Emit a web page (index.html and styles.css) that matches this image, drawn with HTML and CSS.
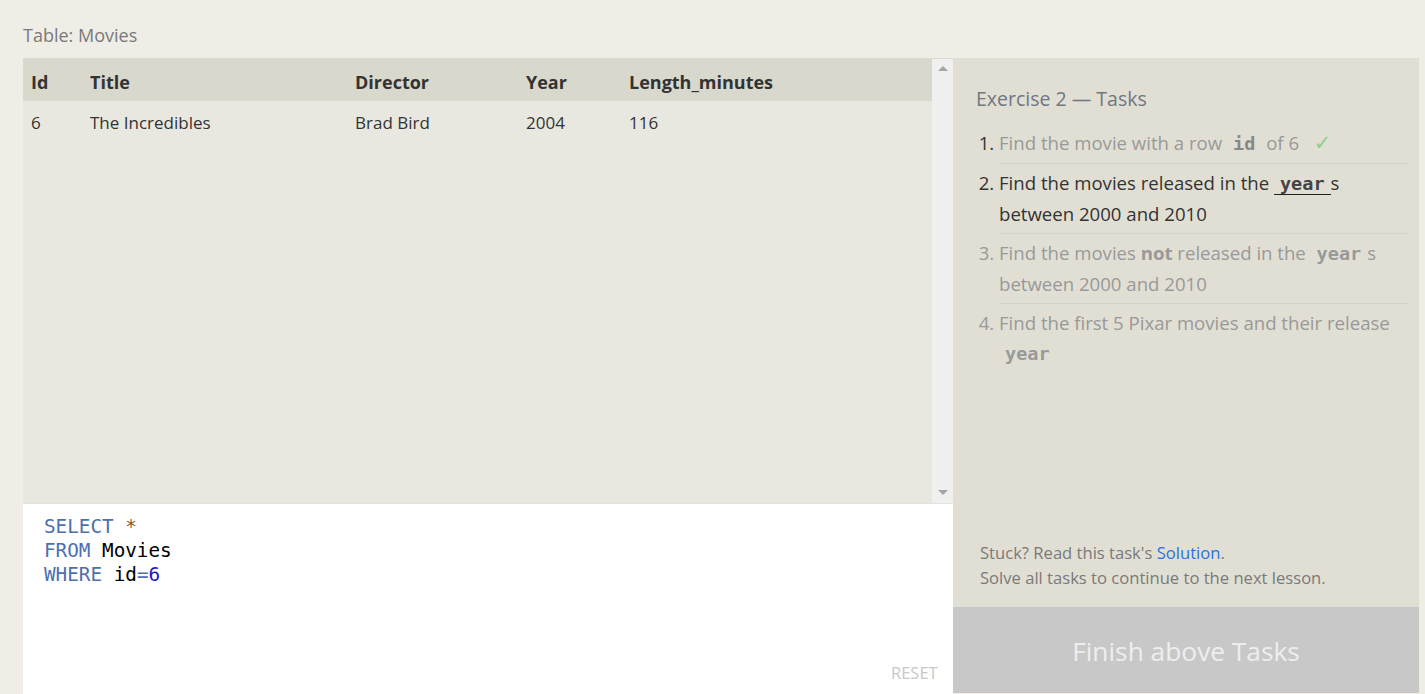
FILE: index.html
```html
<!DOCTYPE html>
<html>
<head>
<meta charset="utf-8">
<link rel="stylesheet" href="styles.css">
</head>
<body>
<div class="page">
  <div class="table-title">Table: Movies</div>
  <div class="main">
    <div class="left">
      <div class="results">
        <div class="table-wrap">
          <table class="data">
            <thead>
              <tr><th class="c-id">Id</th><th class="c-title">Title</th><th class="c-dir">Director</th><th class="c-year">Year</th><th class="c-len">Length_minutes</th></tr>
            </thead>
            <tbody>
              <tr><td>6</td><td>The Incredibles</td><td>Brad Bird</td><td>2004</td><td>116</td></tr>
            </tbody>
          </table>
        </div>
        <div class="scrollbar">
          <span class="arrow up"></span>
          <span class="arrow down"></span>
        </div>
      </div>
      <div class="editor">
        <pre class="code"><span class="kw">SELECT</span> <span class="star">*</span>
<span class="kw">FROM</span> Movies
<span class="kw">WHERE</span> id<span class="op">=</span><span class="num">6</span></pre>
        <div class="reset">RESET</div>
      </div>
    </div>
    <div class="right">
      <div class="tasks">
        <div class="tasks-title">Exercise 2 — Tasks</div>
        <ol class="task-list">
          <li class="task done"><span class="task-text">Find the movie with a row <code>id</code> of 6 <span class="check">✓</span></span></li>
          <li class="task active"><span class="task-text">Find the movies released in the <code class="ul">year</code>s between 2000 and 2010</span></li>
          <li class="task todo"><span class="task-text">Find the movies <b>not</b> released in the <code>year</code>s between 2000 and 2010</span></li>
          <li class="task todo last"><span class="task-text">Find the first 5 Pixar movies and their release <code>year</code></span></li>
        </ol>
        <div class="help">
          <div>Stuck? Read this task's <a class="link">Solution</a>.</div>
          <div>Solve all tasks to continue to the next lesson.</div>
        </div>
      </div>
      <div class="finish">Finish above Tasks</div>
    </div>
  </div>
</div>
</body>
</html>
```
FILE: styles.css
```css
html, body {
  margin: 0;
  padding: 0;
  background: #efede6;
  font-family: "Open Sans", "Noto Sans", sans-serif;
  overflow: hidden;
}
.page {
  padding: 22px 6px 0 23px;
}
.table-title {
  font-size: 18px;
  color: #7a7a7a;
  line-height: 26px;
  height: 26px;
}
.main {
  margin-top: 10px;
  display: flex;
  height: 700px;
}
.left {
  width: 930px;
  display: flex;
  flex-direction: column;
}
.results {
  display: flex;
  height: 444px;
  border-top: 1px solid #dcdbd2;
  border-bottom: 1px solid #e4e3da;
}
.table-wrap {
  flex: 1;
  background: #e9e8e0;
}
.data {
  width: 100%;
  border-collapse: collapse;
  color: #333;
}
.data th {
  background: #d9d8cc;
  height: 39px;
  text-align: left;
  font-weight: 700;
  font-size: 18px;
  padding: 3px 0 0 8px;
}
.data td {
  font-size: 17px;
  height: 43px;
  padding: 0 0 0 8px;
}
.c-id { width: 51px; }
.c-title { width: 257px; }
.c-dir { width: 163px; }
.c-year { width: 95px; }
.scrollbar {
  width: 21px;
  background: #f0f0f0;
  display: flex;
  flex-direction: column;
  justify-content: space-between;
  align-items: center;
  padding: 7px 0 8px;
  box-sizing: border-box;
}
.arrow {
  width: 0;
  height: 0;
  border-left: 5px solid transparent;
  border-right: 5px solid transparent;
}
.arrow.up { border-bottom: 5px solid #a3a3a3; }
.arrow.down { border-top: 5px solid #a3a3a3; }
.editor {
  flex: 1;
  background: #fff;
  position: relative;
}
.code {
  margin: 0;
  padding: 11px 21px;
  font-family: "DejaVu Sans Mono", monospace;
  font-size: 19.3px;
  line-height: 24px;
  color: #000;
}
.kw { color: #4d6fae; }
.star { color: #8c5a1e; }
.op { color: #4d6fae; }
.num { color: #1f16c0; }
.reset {
  position: absolute;
  left: 868px;
  top: 157px;
  font-size: 16.5px;
  color: #c8c8c8;
}
.right {
  width: 466px;
  display: flex;
  flex-direction: column;
  height: 635px;
}
.tasks {
  background: #e1dfd4;
  height: 550px;
  padding: 27px 11px 0 23px;
  box-sizing: border-box;
  display: flex;
  flex-direction: column;
}
.tasks-title {
  font-size: 19.5px;
  color: #6f7780;
  line-height: 28px;
}
.task-list {
  margin: 11px 0 0 0;
  padding: 0 0 0 23px;
  font-size: 18.6px;
  line-height: 30px;
}
.task {
  padding: 4px 0 4px 0;
  border-bottom: 1px solid #d5d3c7;
}
.task.last { border-bottom: none; }
.task::marker { color: #333; }
.done .task-text { color: #999; }
.active .task-text { color: #333; }
.todo .task-text { color: #999; }
.todo::marker { color: #999; }
.task code {
  font-family: "DejaVu Sans Mono", monospace;
  font-weight: 700;
  font-size: 18.5px;
  padding: 0 6px;
}
.done code { color: #888; }
.todo code { color: #999; }
.active code { color: #444; }
code.ul { border-bottom: 1px solid #222; }
.check { color: #8ed08e; margin-left: 10px; font-size: 21px; font-family: "DejaVu Sans", sans-serif; }
.help {
  margin-top: auto;
  margin-bottom: 17px;
  padding-left: 4px;
  font-size: 16.6px;
  line-height: 25px;
  color: #7a7a7a;
}
.link { color: #2a72e0; }
.finish {
  background: #c8c8c8;
  color: #eeeeee;
  font-size: 26.3px;
  height: 86px;
  display: flex;
  align-items: center;
  justify-content: center;
  padding-top: 2px;
  box-sizing: border-box;
}
```
